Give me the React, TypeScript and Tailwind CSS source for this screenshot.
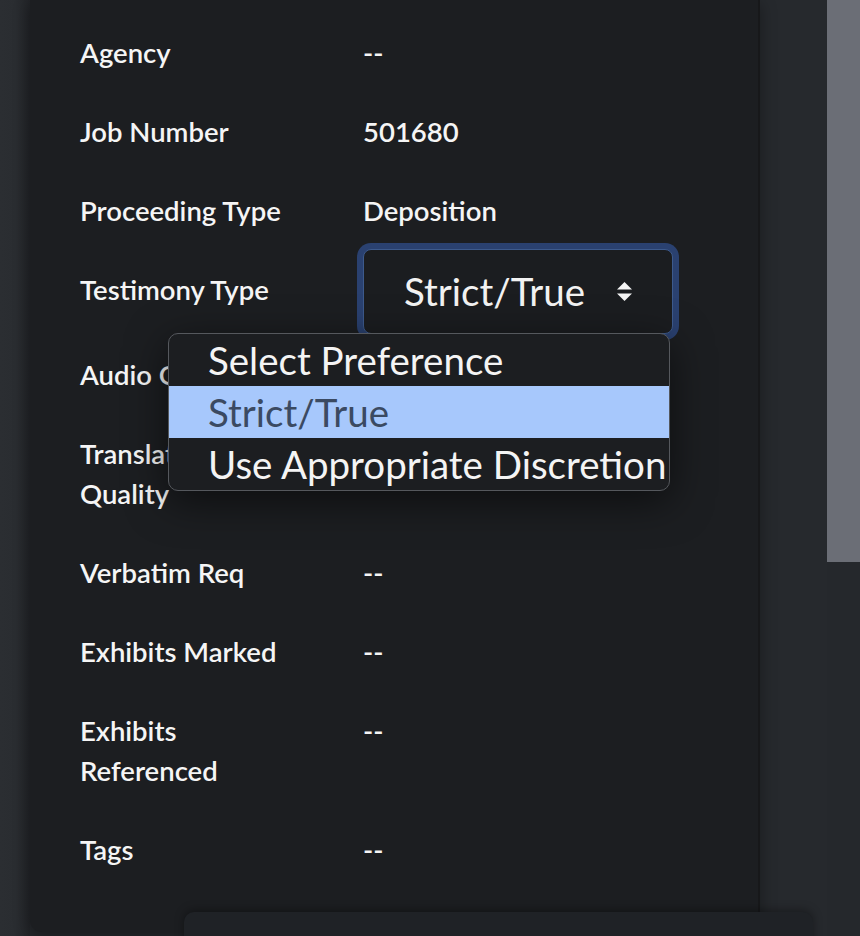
import { useState } from "react";

type Row = { label: string[]; value: string; kind?: "select" };

const rows: Row[] = [
  { label: ["Agency"], value: "--" },
  { label: ["Job Number"], value: "501680" },
  { label: ["Proceeding Type"], value: "Deposition" },
  { label: ["Testimony Type"], value: "Strict/True", kind: "select" },
  // values of the next two rows sit under the open dropdown
  { label: ["Audio Clarity"], value: "" },
  { label: ["Translation", "Quality"], value: "" },
  { label: ["Verbatim Req"], value: "--" },
  { label: ["Exhibits Marked"], value: "--" },
  { label: ["Exhibits", "Referenced"], value: "--" },
  { label: ["Tags"], value: "--" },
];

const options = ["Select Preference", "Strict/True", "Use Appropriate Discretion"];

function SortArrows() {
  return (
    <svg width="17" height="20" viewBox="0 0 17 20" className="shrink-0">
      <path d="M8.5 0 L16 7.5 L1 7.5 Z" fill="#f5f5f5" />
      <path d="M1 11.5 L16 11.5 L8.5 19 Z" fill="#f5f5f5" />
    </svg>
  );
}

function PreferenceSelect({ value }: { value: string }) {
  return (
    <div className="-mt-[21px] -mb-[18px] flex h-[85px] w-[310px] items-center rounded-[8px] border border-[#3d5a8c] bg-[#1b1d20] pl-[40px] pr-[39px] shadow-[0_0_0_6px_#2a4170]">
      <span className="whitespace-nowrap text-[38.5px] font-normal leading-none text-[#f2f2f2]">{value}</span>
      <span className="ml-auto">
        <SortArrows />
      </span>
    </div>
  );
}

export default function App() {
  const [selected] = useState(1);

  return (
    <div
      className="relative flex h-[936px] w-[860px] overflow-hidden bg-[#25282c]"
      style={{ fontFamily: "Lato, 'Open Sans', sans-serif" }}
    >
      <div className="w-[30px] shrink-0 bg-gradient-to-r from-[#2b2e32] via-[#2a2d31] to-[#222428]" />

      <div className="relative h-[932px] w-[730px] shrink-0 rounded-b-[12px] border-r-2 border-[#17181a] bg-[#1c1e21] pl-[50px] pt-[13px] shadow-[0_4px_16px_rgba(0,0,0,0.35)]">
        {rows.map((row) => (
          <div key={row.label.join(" ")} className="flex items-start pb-[19px] pt-[20px]">
            <div className="w-[283px] shrink-0 whitespace-nowrap text-[27.5px] font-semibold leading-[40px] text-[#f5f5f5]">
              {row.label.map((l) => (
                <div key={l}>{l}</div>
              ))}
            </div>
            {row.kind === "select" ? (
              <PreferenceSelect value={row.value} />
            ) : (
              <div className="text-[27.5px] font-semibold leading-[40px] text-[#f5f5f5]">{row.value}</div>
            )}
          </div>
        ))}

        <div className="absolute left-[138px] top-[333px] w-[502px] overflow-hidden rounded-[10px] border border-[#55585d] bg-[#1c1e21] shadow-[0_10px_40px_rgba(0,0,0,0.55)]">
          {options.map((o, i) => (
            <div
              key={o}
              className={
                i === selected
                  ? "h-[52px] whitespace-nowrap bg-[#a7c8fc] pl-[39px] text-[38.5px] leading-[52px] text-[#3b4a62]"
                  : "h-[52px] whitespace-nowrap pl-[39px] text-[38.5px] leading-[52px] text-[#f4f4f4]"
              }
            >
              {o}
            </div>
          ))}
        </div>
      </div>

      <div className="w-[67px] shrink-0 bg-[#26292d]" />

      <div className="flex w-[33px] shrink-0 flex-col">
        <div className="h-[562px] bg-[#6b6e76]" />
        <div className="flex-1 bg-[#25282c]" />
      </div>

      <div className="absolute left-[184px] top-[912px] h-[40px] w-[629px] rounded-t-[10px] bg-[#1f2226] shadow-[0_-2px_10px_rgba(0,0,0,0.35)]" />
    </div>
  );
}
